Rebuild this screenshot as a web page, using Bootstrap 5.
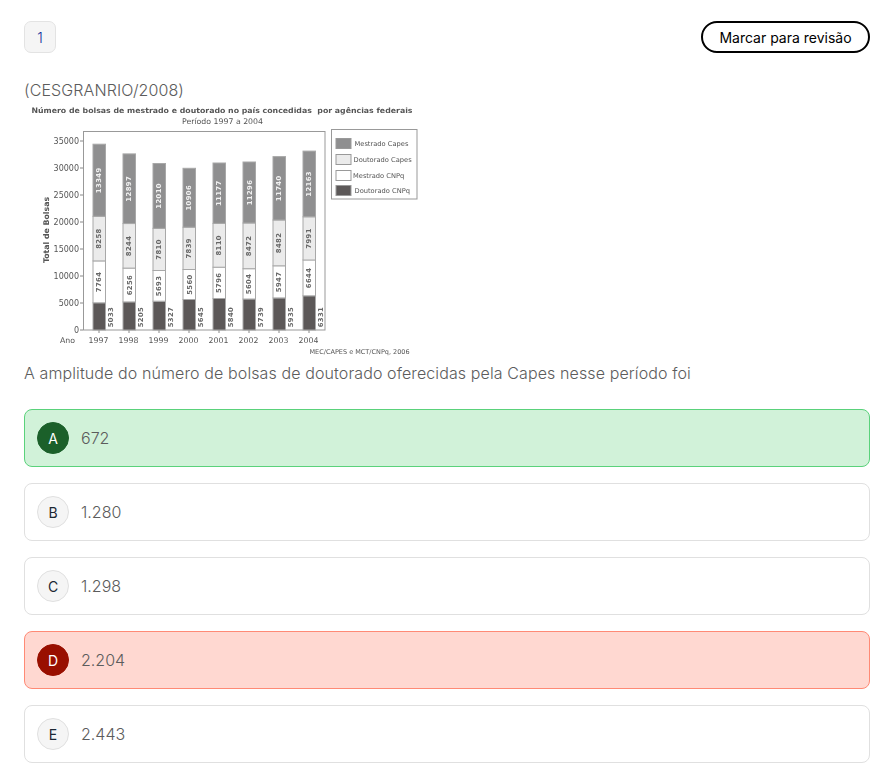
<!DOCTYPE html>
<html lang="pt-BR">
<head>
<meta charset="utf-8">
<title>Questão 1</title>
<link href="https://cdn.jsdelivr.net/npm/bootstrap@5.3.0/dist/css/bootstrap.min.css" rel="stylesheet">
<style>
html,body{height:775px;overflow:hidden}
body{font-family:Inter,"Liberation Sans",sans-serif;background:#fff;color:#666;padding:21px 20px 0 24px}
.qnum{width:32px;height:32px;background:#f5f5f5;border:1px solid #e3e3e3;border-radius:7px;color:#0d2a9a;font-size:14px;font-weight:300}
.review-btn{height:32px;width:169px;padding:0;border:2px solid #000;border-radius:16px;background:#fff;color:#000;font-size:14px;letter-spacing:0}
.review-btn:hover{background:#fff;color:#000;border-color:#000}
.src{font-size:16px;line-height:24px;margin:25px 0 0;color:#5c5c5c;font-weight:300;letter-spacing:.11px}
.chart{display:block;width:400px;height:256px;margin-top:0;filter:blur(.3px)}
.chart text{font-family:"DejaVu Sans",sans-serif;fill:#555}
.chart text.val{fill:#666}
.chart text.val-light{fill:#f2f2f2}
.stem{font-size:16px;line-height:24px;margin:3px 0 24px;color:#5c5c5c;font-weight:300;letter-spacing:.11px}
.opts{gap:16px}
.opt{height:58px;border:1px solid #e0e0e0;border-radius:8px;padding-left:12px;gap:12px;background:#fff;font-size:16px;color:#5c5c5c;font-weight:300}
.opt-letter{width:32px;height:32px;flex:none;border-radius:50%;border:1px solid #e0e0e0;background:#f5f5f5;color:#1c2733;font-size:14px;font-weight:400}
.opt-ok{background:#d1f2d9;border-color:#5ad27b}
.opt-ok .opt-letter{background:#1b602a;border-color:#1b602a;color:#fff}
.opt-bad{background:#ffd8d1;border-color:#ff8a75}
.opt-bad .opt-letter{background:#990f00;border-color:#990f00;color:#fff}
</style>
</head>
<body>
<div class="d-flex justify-content-between align-items-start">
  <div class="qnum d-flex align-items-center justify-content-center">1</div>
  <button type="button" class="btn review-btn">Marcar para revisão</button>
</div>
<p class="src">(CESGRANRIO/2008)</p>
<svg class="chart" id="chart" viewBox="24 102 400 256" xmlns="http://www.w3.org/2000/svg"></svg>
<p class="stem">A amplitude do número de bolsas de doutorado oferecidas pela Capes nesse período foi</p>
<div class="d-flex flex-column opts">
  <div class="opt opt-ok d-flex align-items-center"><span class="opt-letter d-flex align-items-center justify-content-center">A</span><span>672</span></div>
  <div class="opt d-flex align-items-center"><span class="opt-letter d-flex align-items-center justify-content-center">B</span><span>1.280</span></div>
  <div class="opt d-flex align-items-center"><span class="opt-letter d-flex align-items-center justify-content-center">C</span><span>1.298</span></div>
  <div class="opt opt-bad d-flex align-items-center"><span class="opt-letter d-flex align-items-center justify-content-center">D</span><span>2.204</span></div>
  <div class="opt d-flex align-items-center"><span class="opt-letter d-flex align-items-center justify-content-center">E</span><span>2.443</span></div>
</div>
<script>
(function(){
var d=[[1997,5033,7764,8258,13349],[1998,5205,6256,8244,12897],[1999,5327,5693,7810,12010],[2000,5645,5560,7839,10906],[2001,5840,5796,8110,11177],[2002,5739,5604,8472,11296],[2003,5935,5947,8482,11740],[2004,6331,6644,7991,12163]];
var fills=['#5c5858','#fff','#ebebeb','#8f8f90'],k=0.0054,base=330,s='';
function t(x,y,str,size,o){o=o||'';return '<text x="'+x+'" y="'+y+'" font-size="'+size+'" '+o+'>'+str+'</text>';}
s+=t(222,113,'Número de bolsas de mestrado e doutorado no país concedidas  por agências federais',7.4,'text-anchor="middle" font-weight="700" textLength="381" lengthAdjust="spacingAndGlyphs" xml:space="preserve"');
s+=t(222.5,124,'Período 1997 a 2004',7.8,'text-anchor="middle"');
s+='<rect x="83.5" y="131.5" width="241.5" height="198.5" fill="#fff" stroke="#999"/>';
for(var v=0;v<=35000;v+=5000){var y=base-v*k;s+='<line x1="80" x2="83" y1="'+y+'" y2="'+y+'" stroke="#888"/>';s+=t(79,y+3,v,8,'text-anchor="end"');}
s+=t(49,230,'Total de Bolsas',7.8,'text-anchor="middle" font-weight="700" transform="rotate(-90 49 230)"');
s+=t(60,343,'Ano',7.8);
d.forEach(function(r,i){
 var x=93+30*i,w=12.5,y=base;
 s+=t(x+5.5,343,r[0],7.8,'text-anchor="middle"');
 s+='<line x1="'+(x+6)+'" x2="'+(x+6)+'" y1="330" y2="333" stroke="#888"/>';
 for(var j=1;j<=4;j++){
  var h=r[j]*k;y-=h;
  s+='<rect x="'+x+'" y="'+y.toFixed(1)+'" width="'+w+'" height="'+h.toFixed(1)+'" fill="'+fills[j-1]+'" stroke="#a8a8a8"/>';
  var cx,cy,c;
  if(j==1){cx=x+20;cy=317;c='val';}
  else{cx=x+8.5;cy=y+h/2;c=j==4?'val-light':'val';}
  s+='<text class="'+c+'" x="'+cx+'" y="'+cy.toFixed(1)+'" font-size="6.8" font-weight="700" letter-spacing=".4" text-anchor="middle" transform="rotate(-90 '+cx+' '+cy.toFixed(1)+')">'+r[j]+'</text>';
 }
});
s+='<rect x="331.5" y="129.5" width="85.5" height="69.5" fill="#fff" stroke="#999"/>';
[['Mestrado Capes','#8f8f90',138,354.5],['Doutorado Capes','#ebebeb',154,353.5],['Mestrado CNPq','#fff',170,353],['Doutorado CNPq','#5c5858',185,354.5]].forEach(function(l){
 s+='<rect x="336" y="'+l[2]+'.5" width="15" height="10" fill="'+l[1]+'" stroke="#999"/>';
 s+=t(l[3],l[2]+8,l[0],6.7);
});
s+=t(309.5,354,'MEC/CAPES e MCT/CNPq, 2006',6.5);
document.getElementById('chart').innerHTML=s;
})();
</script>
<script src="https://cdn.jsdelivr.net/npm/bootstrap@5.3.0/dist/js/bootstrap.bundle.min.js"></script>
</body>
</html>
